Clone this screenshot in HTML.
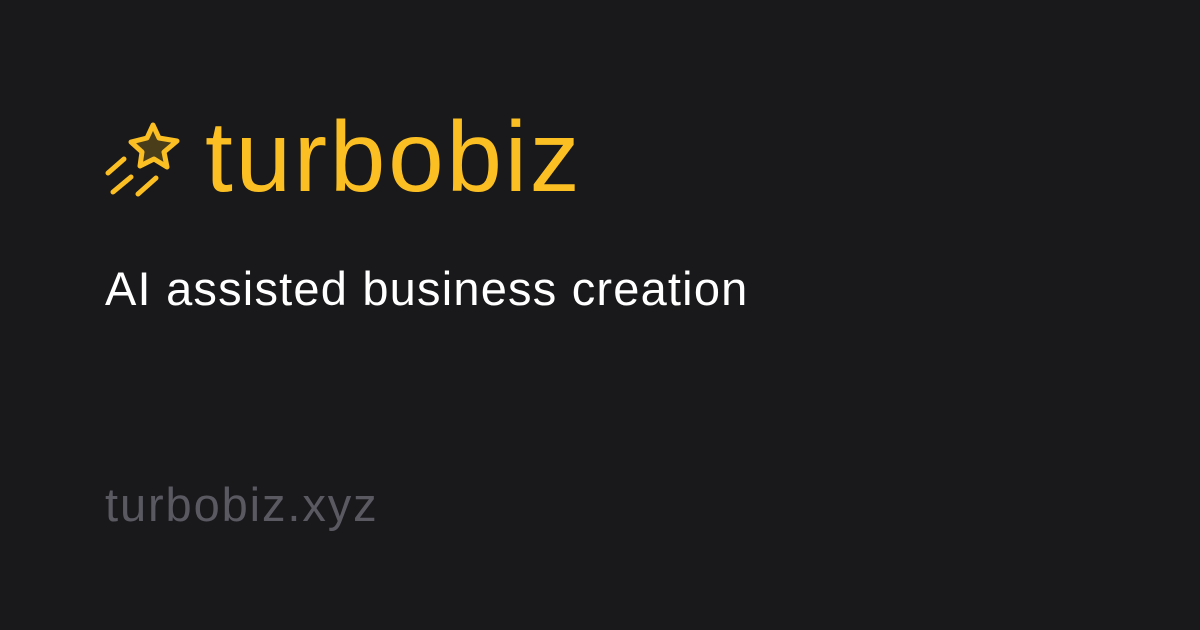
<!DOCTYPE html>
<html><head><style>
body{margin:0;width:1200px;height:630px;background:#19191b;font-family:"Liberation Sans",sans-serif;position:relative;overflow:hidden}
.t{position:absolute;white-space:nowrap}
</style></head><body>
<svg style="position:absolute;left:0;top:0" width="300" height="230">
<path d="M153,125 L159,138 L177,141 L164,152 L167,167 L154,159 L140,166 L142,152 L131,142 L147,138 Z" fill="#4a3d1a" stroke="#fbbf24" stroke-width="5" stroke-linejoin="round"/>
<g stroke="#fbbf24" stroke-width="5" stroke-linecap="round">
<line x1="108" y1="173" x2="124" y2="159"/>
<line x1="113" y1="192" x2="131" y2="177"/>
<line x1="138" y1="194" x2="156" y2="178"/>
</g></svg>
<div class="t" style="left:205px;top:100px;font-size:100px;color:#fbbf24;letter-spacing:2.7px">turbobiz</div>
<div class="t" style="left:105px;top:261px;font-size:47px;color:#fff;letter-spacing:1.2px">AI assisted business creation</div>
<div class="t" style="left:105px;top:477px;font-size:47px;color:#5a5962;letter-spacing:1.9px">turbobiz.xyz</div>
</body></html>
